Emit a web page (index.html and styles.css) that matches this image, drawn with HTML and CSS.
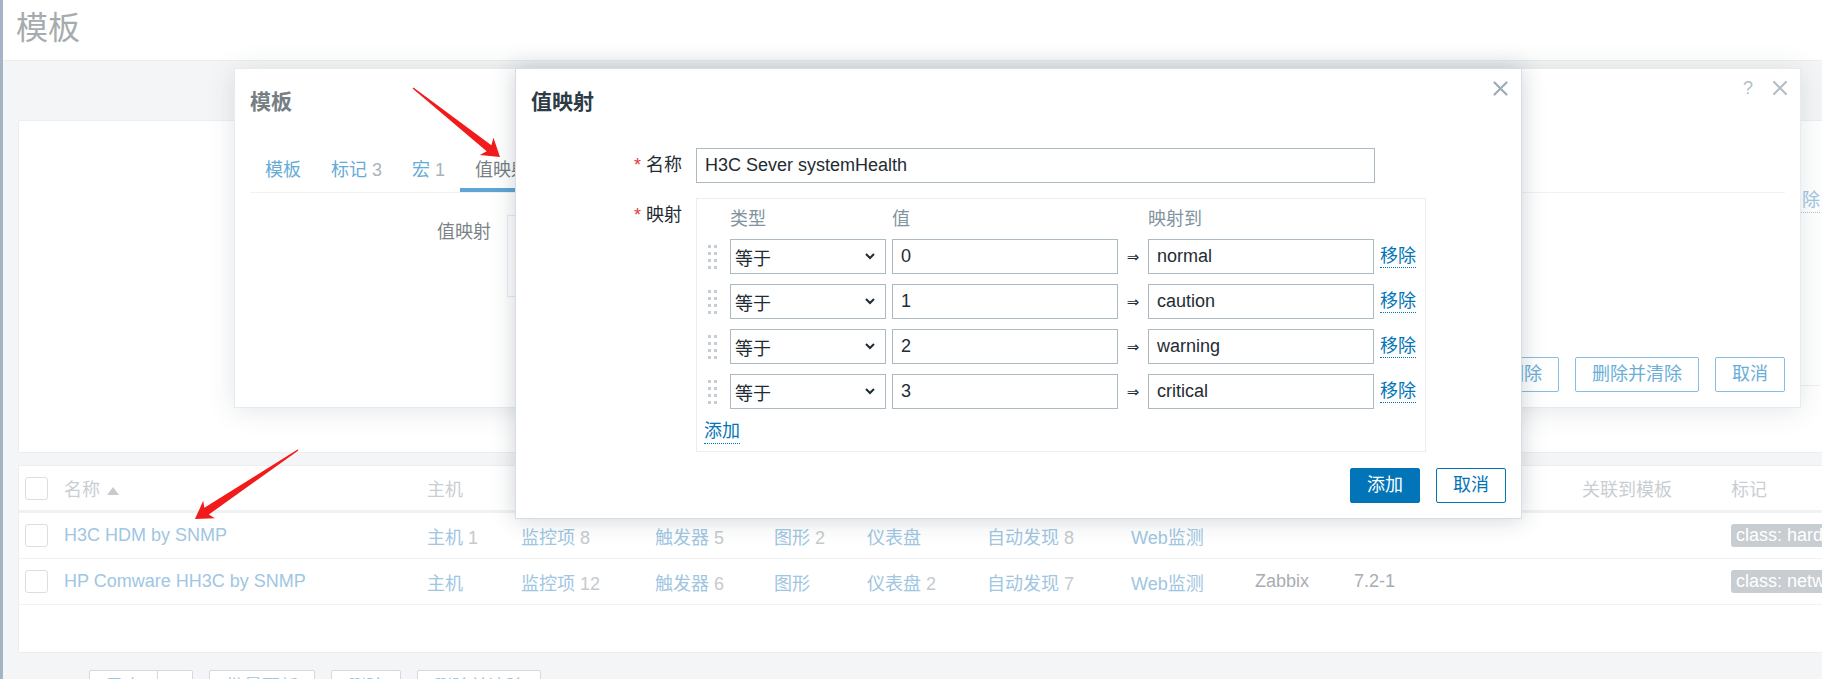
FILE: index.html
```html
<!DOCTYPE html>
<html lang="zh-CN">
<head>
<meta charset="utf-8">
<title>模板</title>
<link rel="stylesheet" href="styles.css">
</head>
<body>
<div class="app">
  <div class="sidebar-edge"></div>
  <main class="main">
    <header class="page-header"><h1>模板</h1></header>
    <div class="content">
      <section class="filter-panel">
        <div class="filter-row"><a class="link-action pale-link">移除</a></div>
        <div class="filter-sep"></div>
      </section>
      <section class="list-panel">
        <div class="trow thead">
          <span><span class="cb"></span></span>
          <span>名称 <svg class="sort" width="12" height="8" viewBox="0 0 12 8"><polygon points="6,0 12,8 0,8"/></svg></span>
          <span>主机</span><span>监控项</span><span>触发器</span><span>图形</span><span>仪表盘</span><span>自动发现</span><span>Web</span><span>供应商</span><span>版本</span><span></span><span>关联到模板</span><span>标记</span>
        </div>
        <div class="trow">
          <span><span class="cb"></span></span>
          <span class="pl">H3C HDM by SNMP</span>
          <span><span class="pl">主机</span> <span class="cnt">1</span></span>
          <span><span class="pl">监控项</span> <span class="cnt">8</span></span>
          <span><span class="pl">触发器</span> <span class="cnt">5</span></span>
          <span><span class="pl">图形</span> <span class="cnt">2</span></span>
          <span><span class="pl">仪表盘</span></span>
          <span><span class="pl">自动发现</span> <span class="cnt">8</span></span>
          <span><span class="pl">Web监测</span></span>
          <span></span><span></span><span></span><span></span>
          <span><span class="tag">class: hardware</span></span>
        </div>
        <div class="trow">
          <span><span class="cb"></span></span>
          <span class="pl">HP Comware HH3C by SNMP</span>
          <span><span class="pl">主机</span></span>
          <span><span class="pl">监控项</span> <span class="cnt">12</span></span>
          <span><span class="pl">触发器</span> <span class="cnt">6</span></span>
          <span><span class="pl">图形</span></span>
          <span><span class="pl">仪表盘</span> <span class="cnt">2</span></span>
          <span><span class="pl">自动发现</span> <span class="cnt">7</span></span>
          <span><span class="pl">Web监测</span></span>
          <span class="plain">Zabbix</span>
          <span class="plain">7.2-1</span>
          <span></span><span></span>
          <span><span class="tag">class: network</span></span>
        </div>
      </section>
      <div class="actions">
        <span class="sel-count">0 选择</span>
        <div class="split"><button class="abtn">导出</button><button class="abtn abtn-arrow">▾</button></div>
        <button class="abtn">批量更新</button>
        <button class="abtn">删除</button>
        <button class="abtn">删除并清除</button>
      </div>
    </div>
  </main>
</div>

<div class="dialog dlg-template">
  <div class="dlg-head">
    <h4 class="tpl-title">模板</h4>
    <div class="dlg-controls">
      <span class="help">?</span>
      <svg class="close tpl-close" width="14" height="14" viewBox="0 0 14 14"><path d="M1 1 L13 13 M13 1 L1 13"/></svg>
    </div>
  </div>
  <ul class="tabs">
    <li>模板</li>
    <li>标记 <span class="n">3</span></li>
    <li>宏 <span class="n">1</span></li>
    <li class="active">值映射</li>
  </ul>
  <div class="tpl-form">
    <label class="tpl-label">值映射</label>
    <div class="vm-box">
      <div class="vm-box-head">名称</div>
      <div class="vm-box-row">H3C Sever systemHealth</div>
    </div>
  </div>
  <div class="dlg-foot">
    <button class="btn btn-faded">更新</button>
    <button class="btn btn-faded">克隆</button>
    <button class="btn btn-faded">删除</button>
    <button class="btn btn-faded">删除并清除</button>
    <button class="btn btn-faded">取消</button>
  </div>
</div>

<div class="dialog dlg-valuemap">
  <div class="dlg-head">
    <h4 class="vm-title">值映射</h4>
    <div class="dlg-controls">
      <svg class="close vm-close" width="15" height="15" viewBox="0 0 15 15"><path d="M1.5 1.5 L13.5 13.5 M13.5 1.5 L1.5 13.5"/></svg>
    </div>
  </div>
  <div class="vm-form">
    <label class="lbl req">名称</label>
    <input class="txt name-input" type="text" value="H3C Sever systemHealth">
    <label class="lbl req">映射</label>
    <div class="map-table">
      <div class="map-grid map-head"><span></span><span>类型</span><span>值</span><span></span><span>映射到</span><span></span></div>
      <div class="map-rows">
        <div class="map-grid">
          <svg class="drag" width="9" height="24" viewBox="0 0 9 24"><rect x="0" y="0" width="3" height="3"/><rect x="6" y="0" width="3" height="3"/><rect x="0" y="7" width="3" height="3"/><rect x="6" y="7" width="3" height="3"/><rect x="0" y="14" width="3" height="3"/><rect x="6" y="14" width="3" height="3"/><rect x="0" y="21" width="3" height="3"/><rect x="6" y="21" width="3" height="3"/></svg>
          <div class="select"><span>等于</span><svg class="chev" width="10" height="7" viewBox="0 0 10 7"><path d="M1 1 L5 5 L9 1"/></svg></div>
          <input class="txt" type="text" value="0">
          <span class="maps">⇒</span>
          <input class="txt" type="text" value="normal">
          <a class="link-action">移除</a>
        </div>
        <div class="map-grid">
          <svg class="drag" width="9" height="24" viewBox="0 0 9 24"><rect x="0" y="0" width="3" height="3"/><rect x="6" y="0" width="3" height="3"/><rect x="0" y="7" width="3" height="3"/><rect x="6" y="7" width="3" height="3"/><rect x="0" y="14" width="3" height="3"/><rect x="6" y="14" width="3" height="3"/><rect x="0" y="21" width="3" height="3"/><rect x="6" y="21" width="3" height="3"/></svg>
          <div class="select"><span>等于</span><svg class="chev" width="10" height="7" viewBox="0 0 10 7"><path d="M1 1 L5 5 L9 1"/></svg></div>
          <input class="txt" type="text" value="1">
          <span class="maps">⇒</span>
          <input class="txt" type="text" value="caution">
          <a class="link-action">移除</a>
        </div>
        <div class="map-grid">
          <svg class="drag" width="9" height="24" viewBox="0 0 9 24"><rect x="0" y="0" width="3" height="3"/><rect x="6" y="0" width="3" height="3"/><rect x="0" y="7" width="3" height="3"/><rect x="6" y="7" width="3" height="3"/><rect x="0" y="14" width="3" height="3"/><rect x="6" y="14" width="3" height="3"/><rect x="0" y="21" width="3" height="3"/><rect x="6" y="21" width="3" height="3"/></svg>
          <div class="select"><span>等于</span><svg class="chev" width="10" height="7" viewBox="0 0 10 7"><path d="M1 1 L5 5 L9 1"/></svg></div>
          <input class="txt" type="text" value="2">
          <span class="maps">⇒</span>
          <input class="txt" type="text" value="warning">
          <a class="link-action">移除</a>
        </div>
        <div class="map-grid">
          <svg class="drag" width="9" height="24" viewBox="0 0 9 24"><rect x="0" y="0" width="3" height="3"/><rect x="6" y="0" width="3" height="3"/><rect x="0" y="7" width="3" height="3"/><rect x="6" y="7" width="3" height="3"/><rect x="0" y="14" width="3" height="3"/><rect x="6" y="14" width="3" height="3"/><rect x="0" y="21" width="3" height="3"/><rect x="6" y="21" width="3" height="3"/></svg>
          <div class="select"><span>等于</span><svg class="chev" width="10" height="7" viewBox="0 0 10 7"><path d="M1 1 L5 5 L9 1"/></svg></div>
          <input class="txt" type="text" value="3">
          <span class="maps">⇒</span>
          <input class="txt" type="text" value="critical">
          <a class="link-action">移除</a>
        </div>
      </div>
      <a class="link-action add-link">添加</a>
    </div>
  </div>
  <div class="dlg-foot vm-foot">
    <button class="btn btn-primary">添加</button>
    <button class="btn btn-alt">取消</button>
  </div>
</div>

<svg class="annot" width="1822" height="679" viewBox="0 0 1822 679">
  <polygon transform="translate(413,88) rotate(38.4)" points="0,-0.7 97,-3.8 94,-11 111,0 94,11 97,3.8 0,0.7"/>
  <polygon transform="translate(298,450) rotate(146.2)" points="0,-0.7 110,-4 107,-10.5 124,0 107,10.5 110,4 0,0.7"/>
</svg>
</body>
</html>
```

FILE: styles.css
```css
* { box-sizing: border-box; }
html, body { margin: 0; padding: 0; }
body {
  width: 1822px;
  height: 679px;
  overflow: hidden;
  position: relative;
  font-family: "Liberation Sans", Arial, "Noto Sans CJK SC", sans-serif;
  font-size: 18px;
  color: #1f2c33;
  background: #f4f5f6;
}

/* ---------- background page ---------- */
.app { display: flex; height: 679px; }
.sidebar-edge { width: 3px; flex: none; background: #a3b5c4; }
.main { flex: 1; min-width: 0; display: flex; flex-direction: column; }
.page-header {
  height: 61px;
  flex: none;
  background: #fff;
  border-bottom: 1px solid #eceef0;
  padding-left: 13px;
}
.page-header h1 {
  margin: 0;
  font-size: 32px;
  font-weight: normal;
  line-height: 56px;
  color: #a6abae;
}
.content { flex: 1; padding: 59px 0 0 15px; background: #f4f5f6; }

.filter-panel {
  height: 333px;
  background: #fff;
  border: 1px solid #eceef0;
  border-right: 0;
  padding: 67px 2px 0 0;
}
.filter-row { display: flex; justify-content: flex-end; line-height: 24px; }
.filter-sep { margin: 172px 0 0 600px; border-top: 1px solid #eef0f2; }

.link-action {
  text-decoration: none;
  color: #0275b8;
  border-bottom: 1px dotted #0275b8;
  cursor: pointer;
}
.pale-link { color: #a0c6e2; border-bottom-color: #a0c6e2; }

.list-panel {
  margin-top: 12px;
  height: 188px;
  background: #fff;
  border: 1px solid #eceef0;
  border-right: 0;
  overflow: hidden;
}
.trow {
  display: grid;
  grid-template-columns: 39px 363px 94px 134px 119px 93px 120px 144px 124px 99px 86px 142px 149px 1fr;
  align-items: center;
  padding-left: 6px;
  height: 46px;
  border-bottom: 1px solid #f0f2f3;
  white-space: nowrap;
}
.thead {
  height: 47px;
  border-bottom: 3px solid #eff1f2;
  color: #c9ced2;
}
.sort { fill: #c5cbcf; margin-left: 2px; vertical-align: 1px; }
.cb {
  display: block;
  width: 23px;
  height: 23px;
  border: 1px solid #dadfe2;
  border-radius: 3px;
  background: #fff;
}
.pl { color: #a0c6e2; }
.cnt { color: #c6cacd; }
.plain { color: #a9adb1; }
.tag {
  display: inline-block;
  background: #c8cdd1;
  color: #fff;
  padding: 0 5px;
  line-height: 23px;
  border-radius: 3px;
}

.actions {
  display: flex;
  align-items: center;
  gap: 16px;
  padding: 17px 0 0 7px;
}
.sel-count { width: 48px; color: #c9ced2; white-space: nowrap; }
.split { display: flex; }
.abtn {
  height: 35px;
  padding: 0 16px;
  font: inherit;
  line-height: 33px;
  background: #fff;
  color: #a0c6e2;
  border: 1px solid #d3d9dd;
  border-radius: 2px;
}
.split .abtn:first-child { border-radius: 2px 0 0 2px; width: 69px; padding: 0; }
.abtn-arrow { width: 35px; padding: 0; border-left: 0; border-radius: 0 2px 2px 0; }

/* ---------- dialogs ---------- */
.dialog {
  position: absolute;
  background: #fff;
  display: flex;
  flex-direction: column;
}
.dlg-template {
  left: 234px;
  top: 68px;
  width: 1567px;
  height: 340px;
  border: 1px solid #e7ebee;
  box-shadow: 0 2px 26px rgba(40, 60, 75, 0.13);
  padding-bottom: 15px;
}
.dlg-valuemap {
  left: 515px;
  top: 68px;
  width: 1007px;
  border: 1px solid #d7dee3;
  box-shadow: 0 0 22px rgba(30, 50, 65, 0.22);
}
.dlg-head { display: flex; align-items: flex-start; padding: 0 13px 0 15px; }
.dlg-head h4 {
  margin: 0;
  padding-top: 21px;
  font-size: 21px;
  line-height: 24px;
  font-weight: bold;
}
.tpl-title { color: #767e84; }
.vm-title { color: #2d3b45; }
.dlg-controls {
  margin-left: auto;
  margin-top: 12px;
  display: flex;
  align-items: center;
  gap: 20px;
  height: 14px;
}
.help { color: #b4bec5; font-size: 18px; line-height: 14px; }
.close { fill: none; stroke-width: 2.2; stroke-linecap: round; }
.tpl-close { stroke: #b4bec5; }
.vm-close { stroke: #9eabb4; }

.tabs {
  list-style: none;
  margin: 44px 15px 0;
  padding: 0;
  display: flex;
  border-bottom: 1px solid #f0f2f4;
}
.tabs li {
  padding: 0 15px 6px;
  line-height: 24px;
  border-bottom: 4px solid transparent;
  color: #66abd6;
  white-space: nowrap;
}
.tabs li .n { color: #aab3b9; }
.tabs li.active { color: #767e84; border-bottom-color: #5fa4d4; }

.tpl-form {
  display: grid;
  grid-template-columns: 241px 1fr;
  column-gap: 16px;
  margin-top: 22px;
  padding: 0 15px;
}
.tpl-label { text-align: right; line-height: 34px; color: #7b8287; }
.vm-box {
  height: 82px;
  width: 900px;
  border: 1px solid #e8ecef;
  padding: 8px 6px;
  color: #b8c3ca;
  line-height: 26px;
}
.vm-box-row { color: #9aa4aa; }

.dlg-foot {
  margin-top: auto;
  display: flex;
  justify-content: flex-end;
  gap: 16px;
  padding: 0 15px;
}
.vm-foot { margin-top: 0; padding: 16px 15px 15px; }

.btn {
  height: 35px;
  padding: 0 16px;
  font: inherit;
  line-height: 33px;
  border: 1px solid;
  border-radius: 2px;
  background: #fff;
  white-space: nowrap;
}
.btn-faded { color: #6aaed8; border-color: #86bde0; }
.btn-primary { background: #0275b8; border-color: #0275b8; color: #fff; }
.btn-alt { color: #0275b8; border-color: #0275b8; }

/* value map form */
.vm-form {
  display: grid;
  grid-template-columns: 151px 810px;
  column-gap: 14px;
  row-gap: 15px;
  margin-top: 34px;
  padding: 0 15px;
  align-items: start;
}
.lbl { text-align: right; line-height: 35px; color: #1f2c33; }
.req::before { content: "*"; color: #e33734; margin-right: 5px; }
.txt {
  height: 35px;
  border: 1px solid #acbbc2;
  border-radius: 0;
  padding: 0 8px;
  font: inherit;
  color: #1f2c33;
  background: #fff;
  outline: none;
  margin: 0;
  width: 100%;
}
.name-input { width: 679px; }
.map-table {
  width: 730px;
  border: 1px solid #ebeef0;
  padding: 8px 8px 7px 7px;
  display: flex;
  flex-direction: column;
  align-items: flex-start;
}
.map-grid {
  display: grid;
  grid-template-columns: 16px 156px 226px 18px 226px auto;
  column-gap: 6px;
  align-items: center;
  padding-left: 4px;
}
.map-head {
  height: 24px;
  line-height: 24px;
  margin-bottom: 8px;
  color: #8293a0;
}
.map-rows { display: flex; flex-direction: column; gap: 10px; }
.drag { fill: #c6ced4; }
.select {
  height: 35px;
  border: 1px solid #acbbc2;
  background: #fff;
  display: flex;
  align-items: center;
  padding: 0 10px 0 4px;
}
.chev { margin-left: auto; fill: none; stroke: #1f2c33; stroke-width: 2; }
.maps {
  font-family: "DejaVu Sans", sans-serif;
  font-size: 15px;
  text-align: center;
  color: #1f2c33;
}
.map-grid .link-action { line-height: 22px; justify-self: start; }
.add-link { margin-top: 10px; line-height: 24px; }

/* ---------- annotation arrows ---------- */
.annot {
  position: absolute;
  left: 0;
  top: 0;
  pointer-events: none;
  fill: #f21b1b;
}
```
